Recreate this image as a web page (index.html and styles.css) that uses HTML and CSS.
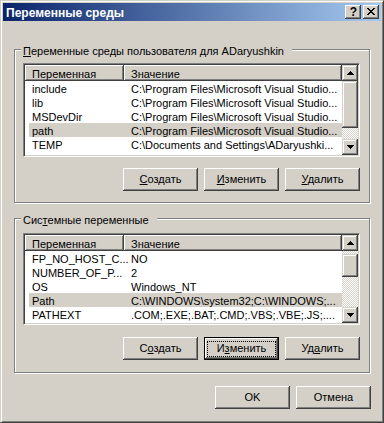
FILE: index.html
```html
<!DOCTYPE html>
<html>

<head>
    <meta charset="UTF-8">
    <meta name="viewport" content="width=device-width, initial-scale=1.0">
    <title>Переменные среды</title>
    <link rel="stylesheet" href="styles.css">
</head>

<body>

    <div class="window">

        <div class="titlebar">
            <span class="title">Переменные среды</span>
            <span class="cap-btn cap-help">?</span>
            <span class="cap-btn">
                <svg width="16" height="14" viewBox="0 0 16 14">
                    <path d="M4 3h2v1H4zM10 3h2v1h-2zM5 4h2v1H5zM9 4h2v1H9zM6 5h4v1H6zM7 6h2v1H7zM6 7h4v1H6zM5 8h2v1H5zM9 8h2v1H9zM4 9h2v1H4zM10 9h2v1h-2z" />
                </svg>
            </span>
        </div>

        <div class="content">

            <div class="group group-user">
                <div class="group-title"><u>П</u>еременные среды пользователя для ADaryushkin</div>

                <div class="list">
                    <div class="list-main">
                        <div class="list-head">
                            <div class="hcell hcell-name">Переменная</div>
                            <div class="hcell hcell-value">Значение</div>
                        </div>
                        <div class="row"><span class="cell-name">include</span><span class="cell-value">C:\Program Files\Microsoft Visual Studio...</span></div>
                        <div class="row"><span class="cell-name">lib</span><span class="cell-value">C:\Program Files\Microsoft Visual Studio...</span></div>
                        <div class="row"><span class="cell-name">MSDevDir</span><span class="cell-value">C:\Program Files\Microsoft Visual Studio...</span></div>
                        <div class="row selected"><span class="cell-name">path</span><span class="cell-value">C:\Program Files\Microsoft Visual Studio...</span></div>
                        <div class="row"><span class="cell-name">TEMP</span><span class="cell-value">C:\Documents and Settings\ADaryushki...</span></div>
                    </div>
                    <div class="scrollbar">
                        <div class="sb-btn">
                            <svg width="16" height="16" viewBox="0 0 16 16"><path d="M8 6h1v1H8zM7 7h3v1H7zM6 8h5v1H6zM5 9h7v1H5z" /></svg>
                        </div>
                        <div class="sb-thumb thumb-user"></div>
                        <div class="sb-track"></div>
                        <div class="sb-btn">
                            <svg width="16" height="16" viewBox="0 0 16 16"><path d="M5 6h7v1H5zM6 7h5v1H6zM7 8h3v1H7zM8 9h1v1H8z" /></svg>
                        </div>
                    </div>
                </div>

                <div class="buttons">
                    <div class="btn"><u>С</u>оздать</div>
                    <div class="btn"><u>И</u>зменить</div>
                    <div class="btn"><u>У</u>далить</div>
                </div>
            </div>

            <div class="group group-system">
                <div class="group-title">Сис<u>т</u>емные переменные</div>

                <div class="list">
                    <div class="list-main">
                        <div class="list-head">
                            <div class="hcell hcell-name">Переменная</div>
                            <div class="hcell hcell-value">Значение</div>
                        </div>
                        <div class="row"><span class="cell-name">FP_NO_HOST_C...</span><span class="cell-value">NO</span></div>
                        <div class="row"><span class="cell-name">NUMBER_OF_P...</span><span class="cell-value">2</span></div>
                        <div class="row"><span class="cell-name">OS</span><span class="cell-value">Windows_NT</span></div>
                        <div class="row selected"><span class="cell-name">Path</span><span class="cell-value">C:\WINDOWS\system32;C:\WINDOWS;...</span></div>
                        <div class="row"><span class="cell-name">PATHEXT</span><span class="cell-value">.COM;.EXE;.BAT;.CMD;.VBS;.VBE;.JS;....</span></div>
                    </div>
                    <div class="scrollbar">
                        <div class="sb-btn">
                            <svg width="16" height="16" viewBox="0 0 16 16"><path d="M8 6h1v1H8zM7 7h3v1H7zM6 8h5v1H6zM5 9h7v1H5z" /></svg>
                        </div>
                        <div class="sb-track track-top"></div>
                        <div class="sb-thumb thumb-system"></div>
                        <div class="sb-track"></div>
                        <div class="sb-btn">
                            <svg width="16" height="16" viewBox="0 0 16 16"><path d="M5 6h7v1H5zM6 7h5v1H6zM7 8h3v1H7zM8 9h1v1H8z" /></svg>
                        </div>
                    </div>
                </div>

                <div class="buttons">
                    <div class="btn">С<u>о</u>здать</div>
                    <div class="btn btn-default"><span class="focus">И<u>з</u>менить</span></div>
                    <div class="btn">Уд<u>а</u>лить</div>
                </div>
            </div>

            <div class="footer">
                <div class="btn">OK</div>
                <div class="btn">Отмена</div>
            </div>

        </div>

    </div>

</body>

</html>
```

FILE: styles.css
```css
* {
    margin: 0;
    padding: 0;
    box-sizing: border-box;
}

body {
    background: #fff;
    font-family: "Liberation Sans", Arial, sans-serif;
    font-size: 11px;
    color: #000;
}

u {
    text-decoration: underline;
}

.window {
    width: 384px;
    height: 423px;
    padding: 2px;
    background: #d4d0c8;
    border: 1px solid;
    border-color: #d4d0c8 #404040 #404040 #d4d0c8;
    box-shadow: inset 1px 1px #fff, inset -1px -1px #808080;
}

/* title bar */
.titlebar {
    display: flex;
    align-items: center;
    gap: 2px;
    height: 18px;
    padding: 0 2px 0 3px;
    background: linear-gradient(to right, #0a246a, #a6caf0);
}

.title {
    flex: 1;
    align-self: flex-start;
    height: 18px;
    line-height: 20px;
    color: #fff;
    font-size: 12px;
    font-weight: bold;
    white-space: nowrap;
}

.cap-btn {
    display: block;
    width: 16px;
    height: 14px;
    background: #d4d0c8;
    box-shadow: inset -1px -1px #404040, inset 1px 1px #fff, inset -2px -2px #808080;
}

.cap-btn svg {
    display: block;
}

.cap-help {
    text-align: center;
    font-weight: bold;
    font-size: 12px;
    line-height: 14px;
    padding-left: 1px;
}

.content {
    padding: 0 11px;
}

/* group boxes */
.group {
    border: 1px solid #808080;
    box-shadow: inset 1px 1px #fff, 1px 1px #fff;
    padding: 0 9px 11px 8px;
}

.group-user {
    margin-top: 28px;
}

.group-system {
    margin-top: 15px;
    padding-bottom: 12px;
}

.group-title {
    display: table;
    margin: -5px 0 0 -2px;
    padding: 0 8px 0 2px;
    line-height: 13px;
    background: #d4d0c8;
    white-space: nowrap;
}

/* list view */
.list {
    display: flex;
    height: 94px;
    margin-top: 5px;
    padding: 1px;
    background: #fff;
    border: 1px solid;
    border-color: #808080 #fff #fff #808080;
    box-shadow: inset 1px 1px #404040, inset -1px -1px #d4d0c8;
}

.group-system .list {
    height: 92px;
    margin-top: 6px;
}

.list-main {
    flex: 1;
    overflow: hidden;
}

.list-head {
    display: flex;
    height: 16px;
    background: #d4d0c8;
}

.hcell {
    height: 16px;
    line-height: 18px;
    padding-left: 7px;
    box-shadow: inset -1px -1px #404040, inset 1px 1px #fff, inset -2px -2px #808080;
}

.hcell-name {
    width: 99px;
}

.hcell-value {
    flex: 1;
}

.row {
    display: flex;
    height: 14px;
    line-height: 16px;
    margin-left: 4px;
    white-space: nowrap;
}

.row.selected {
    background: #d4d0c8;
}

.cell-name {
    flex: none;
    width: 95px;
    padding-left: 3px;
}

.cell-value {
    flex: 1;
    padding-left: 7px;
    overflow: hidden;
}

/* scrollbar */
.scrollbar {
    display: flex;
    flex-direction: column;
    width: 16px;
}

.sb-btn,
.sb-thumb {
    flex: none;
    background: #d4d0c8;
    box-shadow: inset -1px -1px #404040, inset 1px 1px #d4d0c8, inset -2px -2px #808080, inset 2px 2px #fff;
}

.sb-btn {
    height: 16px;
}

.sb-btn svg {
    display: block;
}

.sb-track {
    flex: 1;
    background-image: repeating-conic-gradient(#fff 0 25%, #d4d0c8 0 50%);
    background-size: 2px 2px;
}

.track-top {
    flex: none;
    height: 3px;
}

.thumb-user {
    height: 47px;
}

.thumb-system {
    height: 23px;
}

/* buttons */
.buttons {
    display: flex;
    justify-content: flex-end;
    gap: 6px;
    margin-top: 11px;
}

.group-system .buttons {
    margin-top: 12px;
}

.btn {
    width: 75px;
    height: 23px;
    line-height: 23px;
    text-align: center;
    background: #d4d0c8;
    box-shadow: inset -1px -1px #404040, inset 1px 1px #fff, inset -2px -2px #808080;
}

.btn-default {
    border: 1px solid #000;
    line-height: 21px;
}

.focus {
    display: block;
    height: 16px;
    margin: 3px 2px 2px;
    border: 1px dotted #000;
    line-height: 13px;
}

.footer {
    display: flex;
    justify-content: flex-end;
    gap: 6px;
    margin: 13px -1px 0 0;
}
```
